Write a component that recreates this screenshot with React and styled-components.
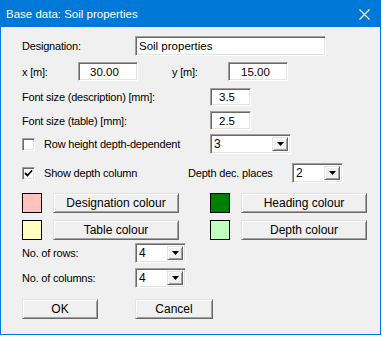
import styled, { createGlobalStyle } from 'styled-components';

const GlobalStyle = createGlobalStyle`
  body {
    margin: 0;
    background: #fafafa;
    font-family: "Liberation Sans", Arial, sans-serif;
  }
`;

function CloseIcon() {
  return (
    <svg width="11" height="11" viewBox="0 0 11 11">
      <path d="M0.5 0.5 L10.5 10.5 M10.5 0.5 L0.5 10.5" stroke="#fff" strokeWidth="1.1" />
    </svg>
  );
}

function CheckBox({ checked }) {
  return (
    <Box>
      {checked && (
        <svg width="9" height="9" viewBox="0 0 9 9">
          <path d="M1 4 L3.5 6.5 L8 1.5" stroke="#000" strokeWidth="1.8" fill="none" />
        </svg>
      )}
    </Box>
  );
}

function Combo({ value, width }) {
  return (
    <ComboBox $w={width}>
      <ComboValue>{value}</ComboValue>
      <DropButton>
        <svg width="7" height="4" viewBox="0 0 7 4">
          <path d="M0 0 H7 L3.5 4 Z" fill="#000" />
        </svg>
      </DropButton>
    </ComboBox>
  );
}

function ColourPick({ colour, label, width }) {
  return (
    <PickGroup $w={width}>
      <Swatch $color={colour} />
      <Button $w={126}>{label}</Button>
    </PickGroup>
  );
}

export default function App() {
  return (
    <>
      <GlobalStyle />
      <Window>
        <TitleBar>
          <Title>Base data: Soil properties</Title>
          <CloseIcon />
        </TitleBar>
        <Body>
          <Row $mt={9} $h={20}>
            <Label $w={113}>Designation:</Label>
            <Field $w={191} $indent={3}>Soil properties</Field>
          </Row>
          <Row $mt={6} $h={19}>
            <Label $w={56}>x [m]:</Label>
            <Field $w={60} $indent={11}>30.00</Field>
            <Label $w={56} $ml={34}>y [m]:</Label>
            <Field $w={60} $indent={12}>15.00</Field>
          </Row>
          <Row $mt={7} $h={18}>
            <Label $w={188}>Font size (description) [mm]:</Label>
            <Field $w={41} $indent={8}>3.5</Field>
          </Row>
          <Row $mt={5} $h={19}>
            <Label $w={188}>Font size (table) [mm]:</Label>
            <Field $w={41} $indent={8}>2.5</Field>
          </Row>
          <Row $mt={4} $h={20}>
            <CheckLabel $w={188}>
              <CheckBox />
              Row height depth-dependent
            </CheckLabel>
            <Combo value="3" width={81} />
          </Row>
          <Row $mt={9} $h={20}>
            <CheckLabel $w={166}>
              <CheckBox checked />
              Show depth column
            </CheckLabel>
            <Label $w={104}>Depth dec. places</Label>
            <Combo value="2" width={51} />
          </Row>
          <Row $mt={10} $h={20}>
            <ColourPick colour="#ffc0c0" label="Designation colour" width={188} />
            <ColourPick colour="#008000" label="Heading colour" />
          </Row>
          <Row $mt={7} $h={20}>
            <ColourPick colour="#ffffc0" label="Table colour" width={188} />
            <ColourPick colour="#c0ffc0" label="Depth colour" />
          </Row>
          <Row $mt={3} $h={20}>
            <Label $w={113}>No. of rows:</Label>
            <Combo value="4" width={51} />
          </Row>
          <Row $mt={5} $h={20}>
            <Label $w={113}>No. of columns:</Label>
            <Combo value="4" width={51} />
          </Row>
          <Row $mt={11} $h={20}>
            <Button $w={76}>OK</Button>
            <Button $w={78} $ml={37}>Cancel</Button>
          </Row>
        </Body>
      </Window>
    </>
  );
}

const Window = styled.div`
  width: 379px;
  height: 333px;
  border: 1px solid #0078d7;
  background: #f0f0f0;
  display: flex;
  flex-direction: column;
`;

const TitleBar = styled.div`
  height: 26px;
  background: #0078d7;
  display: flex;
  align-items: center;
  justify-content: space-between;
  padding: 0 10px 0 5px;
  color: #fff;
`;

const Title = styled.span`
  font-size: 11.5px;
  padding-bottom: 1px;
`;

const Body = styled.div`
  padding-left: 21px;
  display: flex;
  flex-direction: column;
  font-size: 11px;
  letter-spacing: -0.2px;
  color: #000;
`;

const Row = styled.div`
  display: flex;
  align-items: center;
  height: ${(props) => props.$h}px;
  margin-top: ${(props) => props.$mt}px;
`;

const Label = styled.span`
  flex: none;
  width: ${(props) => props.$w}px;
  margin-left: ${(props) => props.$ml || 0}px;
  white-space: nowrap;
`;

const Field = styled.div`
  box-sizing: border-box;
  flex: none;
  width: ${(props) => props.$w}px;
  height: 100%;
  display: flex;
  align-items: center;
  padding-left: ${(props) => props.$indent}px;
  background: #fff;
  border: 1px solid;
  border-color: #a0a0a0 #fff #fff #a0a0a0;
  box-shadow: inset 1px 1px #696969, inset -1px -1px #e3e3e3;
  font-size: 11.5px;
  letter-spacing: 0;
`;

const CheckLabel = styled.span`
  flex: none;
  width: ${(props) => props.$w}px;
  display: flex;
  align-items: center;
  gap: 9px;
  white-space: nowrap;
`;

const Box = styled.span`
  box-sizing: border-box;
  width: 13px;
  height: 13px;
  background: #fff;
  border: 1px solid;
  border-color: #a0a0a0 #fff #fff #a0a0a0;
  box-shadow: inset 1px 1px #696969, inset -1px -1px #e3e3e3;
  display: flex;
  align-items: center;
  justify-content: center;
`;

const ComboBox = styled.div`
  box-sizing: border-box;
  flex: none;
  width: ${(props) => props.$w}px;
  height: 100%;
  display: flex;
  background: #fff;
  border: 1px solid;
  border-color: #a0a0a0 #fff #fff #a0a0a0;
  box-shadow: inset 1px 1px #696969, inset -1px -1px #e3e3e3;
  padding: 2px;
`;

const ComboValue = styled.span`
  flex: 1;
  display: flex;
  align-items: center;
  padding-left: 1px;
  font-size: 12px;
`;

const DropButton = styled.span`
  box-sizing: border-box;
  width: 16px;
  background: #f0f0f0;
  border: 1px solid;
  border-color: #e3e3e3 #696969 #696969 #e3e3e3;
  box-shadow: inset 1px 1px #fff, inset -1px -1px #a0a0a0;
  display: flex;
  align-items: center;
  justify-content: center;
`;

const PickGroup = styled.div`
  flex: none;
  display: flex;
  align-items: center;
  gap: 11px;
  width: ${(props) => (props.$w ? `${props.$w}px` : 'auto')};
  height: 100%;
`;

const Swatch = styled.span`
  box-sizing: border-box;
  flex: none;
  width: 20px;
  height: 20px;
  border: 1px solid #000;
  background: ${(props) => props.$color};
`;

const Button = styled.div`
  box-sizing: border-box;
  flex: none;
  width: ${(props) => props.$w}px;
  height: 20px;
  margin-left: ${(props) => props.$ml || 0}px;
  display: flex;
  align-items: center;
  justify-content: center;
  background: #f0f0f0;
  border: 1px solid;
  border-color: #e3e3e3 #696969 #696969 #e3e3e3;
  box-shadow: inset 1px 1px #fff, inset -1px -1px #a0a0a0;
  font-size: 12px;
  letter-spacing: 0;
  padding-bottom: 1px;
`;
